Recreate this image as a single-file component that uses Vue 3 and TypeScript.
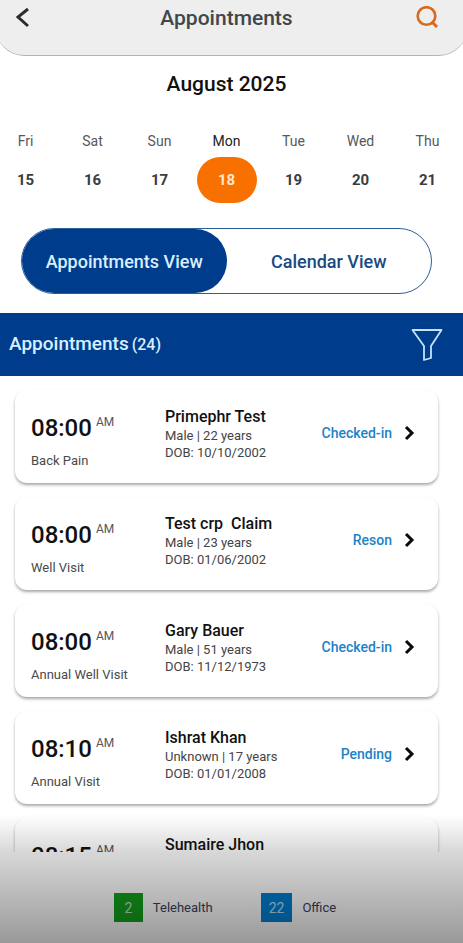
<script setup lang="ts">
import { ref } from 'vue'

interface Day {
  name: string
  date: number
}

interface Appointment {
  time: string
  reason: string
  patient: string
  gender: string
  age: number
  dob: string
  status: string
}

const days: Day[] = [
  { name: 'Fri', date: 15 },
  { name: 'Sat', date: 16 },
  { name: 'Sun', date: 17 },
  { name: 'Mon', date: 18 },
  { name: 'Tue', date: 19 },
  { name: 'Wed', date: 20 },
  { name: 'Thu', date: 21 },
]

const views = ['Appointments View', 'Calendar View']

const appointments: Appointment[] = [
  { time: '08:00', reason: 'Back Pain', patient: 'Primephr Test', gender: 'Male', age: 22, dob: '10/10/2002', status: 'Checked-in' },
  { time: '08:00', reason: 'Well Visit', patient: 'Test crp  Claim', gender: 'Male', age: 23, dob: '01/06/2002', status: 'Reson' },
  { time: '08:00', reason: 'Annual Well Visit', patient: 'Gary Bauer', gender: 'Male', age: 51, dob: '11/12/1973', status: 'Checked-in' },
  { time: '08:10', reason: 'Annual Visit', patient: 'Ishrat Khan', gender: 'Unknown', age: 17, dob: '01/01/2008', status: 'Pending' },
  { time: '08:15', reason: '', patient: 'Sumaire Jhon', gender: '', age: 0, dob: '', status: '' },
]

const selectedDate = ref(18)
const activeView = ref(views[0])
</script>

<template>
  <div class="screen">
    <header class="top-bar">
      <button class="icon-button" type="button" aria-label="Back">
        <svg width="14" height="22" viewBox="0 0 14 22" fill="none" stroke="#2b2d30" stroke-width="3">
          <path d="M12 2 2 10l10 9" />
        </svg>
      </button>
      <h1 class="title">Appointments</h1>
      <button class="icon-button" type="button" aria-label="Search">
        <svg width="24" height="24" viewBox="0 0 24 24" fill="none" stroke="#d9691a" stroke-width="2.6">
          <circle cx="11.5" cy="10" r="8.8" />
          <path d="m17 16 5 5" stroke-width="3" />
        </svg>
      </button>
    </header>

    <h2 class="month">August 2025</h2>

    <div class="week">
      <button
        v-for="day in days"
        :key="day.date"
        type="button"
        class="day"
        :class="{ selected: day.date === selectedDate }"
        @click="selectedDate = day.date"
      >
        <span class="day-name">{{ day.name }}</span>
        <span class="day-date">{{ day.date }}</span>
      </button>
    </div>

    <div class="switch">
      <button
        v-for="view in views"
        :key="view"
        type="button"
        class="switch-item"
        :class="{ active: view === activeView }"
        @click="activeView = view"
      >
        {{ view }}
      </button>
    </div>

    <div class="section-bar">
      <h2 class="section-title">Appointments<span class="count">(24)</span></h2>
      <button class="icon-button" type="button" aria-label="Filter">
        <svg width="32" height="34" viewBox="0 0 32 34" fill="none" stroke="#c6e2fa" stroke-width="1.8" stroke-linejoin="round">
          <path d="M1.500 2h29L20 18v12l-7 2V18Z" />
        </svg>
      </button>
    </div>

    <main class="list">
      <article v-for="item in appointments" :key="item.patient" class="card">
        <div class="slot">
          <p class="time">{{ item.time }}<span class="meridiem">AM</span></p>
          <p class="reason">{{ item.reason }}</p>
        </div>
        <div class="patient">
          <h3 class="name">{{ item.patient }}</h3>
          <template v-if="item.dob">
            <p class="detail">{{ item.gender }} | {{ item.age }} years</p>
            <p class="detail">DOB: {{ item.dob }}</p>
          </template>
        </div>
        <a v-if="item.status" class="status" href="#">
          {{ item.status }}
          <svg width="12" height="16" viewBox="0 0 12 16" fill="none" stroke="#0b0b0b" stroke-width="3">
            <path d="m2 2 6 6-6 6" />
          </svg>
        </a>
      </article>
    </main>

    <footer class="legend">
      <span class="legend-item"><span class="badge telehealth">2</span>Telehealth</span>
      <span class="legend-item"><span class="badge office">22</span>Office</span>
    </footer>
    <div class="shade"></div>
  </div>
</template>

<style>
body {
  background: #fff;
}
</style>

<style scoped>
.screen {
  position: relative;
  display: flex;
  flex-direction: column;
  height: 100vh;
  overflow: hidden;
  font-family: Roboto, "Liberation Sans", sans-serif;
  color: #111;
}

h1,
h2,
h3,
p {
  margin: 0;
  font-weight: 500;
}

button {
  padding: 0;
  border: 0;
  background: none;
  font: inherit;
  color: inherit;
  cursor: pointer;
}

.icon-button {
  display: flex;
}

.top-bar {
  display: flex;
  align-items: center;
  height: 56px;
  margin: 0 -4px;
  padding: 0 28px 20px 20px;
  box-sizing: border-box;
  border-bottom: 1px solid #b5b3b6;
  border-radius: 0 0 28px 28px;
  background: #eee;
}

.title {
  flex: 1;
  padding-left: 8px;
  font-size: 21px;
  line-height: 32px;
  text-align: center;
  color: #41464b;
}

.month {
  margin-top: 16px;
  padding-right: 10px;
  font-size: 21px;
  line-height: 24px;
  text-align: center;
}

.week {
  display: grid;
  grid-template-columns: repeat(7, 1fr);
  margin: 37px 2px 0 -8px;
}

.day {
  display: flex;
  flex-direction: column;
  align-items: center;
  gap: 8px;
}

.day-name {
  font-size: 14px;
  line-height: 16px;
  color: #55585c;
}

.day-date {
  display: flex;
  align-items: center;
  justify-content: center;
  width: 60px;
  height: 46px;
  border-radius: 24px;
  font-size: 15px;
  font-weight: 700;
  color: #3a3d42;
}

.selected .day-name {
  color: #222;
}

.selected .day-date {
  background: #f87000;
  color: #ffe9cf;
}

.switch {
  display: grid;
  grid-template-columns: 1fr 1fr;
  margin: 25px 31px 0 21px;
  border: 1px solid #2c5f96;
  border-radius: 33px;
}

.switch-item {
  height: 64px;
  border-radius: 32px;
  font-size: 18px;
  font-weight: 500;
  color: #1c4a80;
}

.switch-item.active {
  background: #003c8c;
  color: #d8efff;
}

.section-bar {
  display: flex;
  align-items: center;
  justify-content: space-between;
  height: 63px;
  margin-top: 19px;
  padding: 0 20px 0 9px;
  background: #003c8c;
  color: #d8efff;
}

.section-title {
  display: flex;
  align-items: baseline;
  gap: 3px;
  font-size: 19px;
  line-height: 24px;
}

.count {
  font-size: 16px;
}

.list {
  display: flex;
  flex: 1;
  flex-direction: column;
  gap: 14px;
  min-height: 0;
  padding: 14px 25px 0 15px;
  overflow-y: auto;
  scrollbar-width: none;
}

.card {
  display: grid;
  flex: none;
  grid-template-columns: 134px 1fr auto;
  height: 93px;
  padding: 17px 22px 0 16px;
  box-sizing: border-box;
  border-radius: 12px;
  background: #fff;
  box-shadow: 0 2px 3px rgba(0, 0, 0, 0.34);
}

.time {
  display: flex;
  gap: 4px;
  padding-top: 5px;
  font-size: 24px;
  line-height: 32px;
}

.meridiem {
  font-size: 12px;
  font-weight: 400;
  line-height: 20px;
  color: #555;
}

.reason {
  margin-top: 9px;
  font-size: 13px;
  font-weight: 400;
  line-height: 16px;
  color: #4a4a4a;
}

.name {
  font-size: 16px;
  line-height: 20px;
  white-space: pre;
}

.detail {
  font-size: 13px;
  font-weight: 400;
  line-height: 17px;
  color: #444;
}

.status {
  display: flex;
  align-items: center;
  align-self: start;
  gap: 12px;
  padding-top: 16px;
  font-size: 14px;
  font-weight: 500;
  line-height: 20px;
  color: #1d82c6;
  text-decoration: none;
}

.legend {
  display: flex;
  align-items: center;
  justify-content: center;
  gap: 48px;
  height: 91px;
  padding: 20px 13px 0 0;
  box-sizing: border-box;
  font-size: 13px;
  color: #3c4160;
}

.legend-item {
  display: flex;
  align-items: center;
  gap: 10px;
}

.badge {
  display: flex;
  align-items: center;
  justify-content: center;
  min-width: 29px;
  height: 29px;
  padding: 0 8px;
  box-sizing: border-box;
  font-size: 14px;
  color: #b9e6c0;
}

.telehealth {
  background: #14a01c;
}

.office {
  background: #0080d2;
  color: #b8defa;
}

.shade {
  position: absolute;
  right: 0;
  bottom: 0;
  left: 0;
  height: 128px;
  background: linear-gradient(rgba(0, 0, 0, 0), rgba(0, 0, 0, 0.16) 30%, rgba(0, 0, 0, 0.4));
  pointer-events: none;
}
</style>
